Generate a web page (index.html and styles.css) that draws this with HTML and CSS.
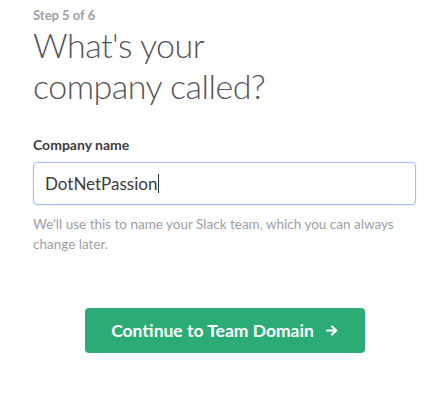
FILE: index.html
```html
<!DOCTYPE html>
<html>
<head>
<meta charset="utf-8">
<link rel="stylesheet" href="styles.css">
</head>
<body>
<main class="page">
  <p class="step">Step 5 of 6</p>
  <h1 class="title">What's your<br>company called?</h1>
  <label class="label" for="company">Company name</label>
  <div class="input" id="company"><span class="value">DotNetPassion</span><span class="caret"></span></div>
  <p class="help">We'll use this to name your Slack team, which you can always change later.</p>
  <div class="actions">
    <button class="btn">Continue to Team Domain <svg class="arrow" width="12" height="11" viewBox="0 0 12 11"><path d="M1 5.5H10M6 1.5L10.2 5.5L6 9.5" fill="none" stroke="#fff" stroke-width="2.2" stroke-linecap="round" stroke-linejoin="round"/></svg></button>
  </div>
</main>
</body>
</html>
```
FILE: styles.css
```css
* { box-sizing: border-box; }
html, body { margin: 0; padding: 0; background: #fff; }
body { font-family: Lato, "Open Sans", sans-serif; }
.page { width: 437px; padding: 6px 21px 0 33px; display: flex; flex-direction: column; }
.step { margin: 0; font-size: 13px; font-weight: 700; color: #9e9ea6; line-height: 18px; }
.title { margin: 0; font-size: 34px; font-weight: 300; color: #555459; line-height: 41px; letter-spacing: -0.5px; }
.label { margin-top: 30px; font-size: 14px; font-weight: 700; color: #3d3c40; line-height: 18px; }
.input { margin-top: 8px; height: 43px; border: 1px solid #a4bdf0; border-radius: 4px; padding: 0 11px; display: flex; align-items: center; font-size: 17px; color: #3d3c40; box-shadow: 0 0 2px rgba(120,150,230,0.3); }
.caret { display: inline-block; width: 1px; height: 19px; background: #333; margin-left: 1px; }
.help { margin: 9px 0 0; font-size: 13.5px; color: #9e9ea6; line-height: 20px; }
.actions { display: flex; justify-content: center; margin-top: 54px; }
.btn { width: 280px; height: 45px; border: none; border-radius: 4px; background: #2bac76; color: #fff; font-family: Lato, sans-serif; font-size: 17.5px; font-weight: 700; display: flex; align-items: center; justify-content: center; gap: 12px; padding: 0 0 1px; }
.arrow { display: block; margin-top: 1px; }
```
